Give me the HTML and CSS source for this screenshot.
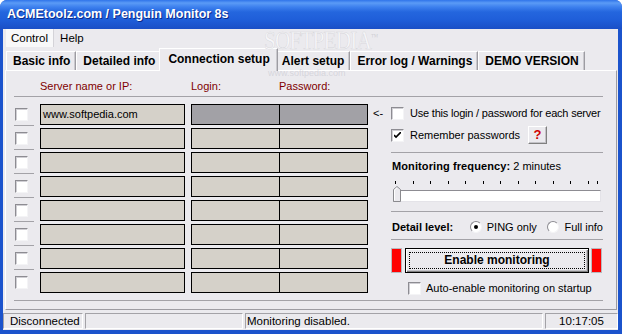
FILE: index.html
```html
<!DOCTYPE html>
<html lang="en">
<head>
    <meta charset="UTF-8">
    <title>ACMEtoolz.com / Penguin Monitor 8s</title>
    <link rel="stylesheet" href="styles.css">
</head>
<body>
    <div class="window">
        <!-- Barra de título -->
        <div class="titlebar">ACMEtoolz.com / Penguin Monitor 8s</div>

        <div class="client">
            <div class="menubar">
                <span class="menu-item open">Control</span>
                <span class="menu-item">Help</span>
            </div>

            <div class="tabs">
                <div class="tab">Basic info</div>
                <div class="tab">Detailed info</div>
                <div class="tab selected">Connection setup</div>
                <div class="tab">Alert setup</div>
                <div class="tab">Error log / Warnings</div>
                <div class="tab">DEMO VERSION</div>
            </div>

            <div class="panel">
                <div class="head">
                    <span></span>
                    <span>Server name or IP:</span>
                    <span>Login:</span>
                    <span>Password:</span>
                </div>

                <div class="main">
                    <!-- Lista de servidores -->
                    <div class="servers">
                        <div class="row">
                            <div class="chk-cell"><span class="checkbox"></span></div>
                            <div class="field server">www.softpedia.com</div>
                            <div class="cred current"><div class="login"></div><div class="pass"></div></div>
                        </div>
                        <div class="row">
                            <div class="chk-cell"><span class="checkbox"></span></div>
                            <div class="field server"></div>
                            <div class="cred"><div class="login"></div><div class="pass"></div></div>
                        </div>
                        <div class="row">
                            <div class="chk-cell"><span class="checkbox"></span></div>
                            <div class="field server"></div>
                            <div class="cred"><div class="login"></div><div class="pass"></div></div>
                        </div>
                        <div class="row">
                            <div class="chk-cell"><span class="checkbox"></span></div>
                            <div class="field server"></div>
                            <div class="cred"><div class="login"></div><div class="pass"></div></div>
                        </div>
                        <div class="row">
                            <div class="chk-cell"><span class="checkbox"></span></div>
                            <div class="field server"></div>
                            <div class="cred"><div class="login"></div><div class="pass"></div></div>
                        </div>
                        <div class="row">
                            <div class="chk-cell"><span class="checkbox"></span></div>
                            <div class="field server"></div>
                            <div class="cred"><div class="login"></div><div class="pass"></div></div>
                        </div>
                        <div class="row">
                            <div class="chk-cell"><span class="checkbox"></span></div>
                            <div class="field server"></div>
                            <div class="cred"><div class="login"></div><div class="pass"></div></div>
                        </div>
                        <div class="row">
                            <div class="chk-cell"><span class="checkbox"></span></div>
                            <div class="field server"></div>
                            <div class="cred"><div class="login"></div><div class="pass"></div></div>
                        </div>
                    </div>

                    <!-- Opções -->
                    <div class="options">
                        <div class="sec sec-login">
                            <div class="opt-row">
                                <span class="arrow">&lt;-</span>
                                <span class="checkbox"></span>
                                <span class="tight">Use this login / password for each server</span>
                            </div>
                            <div class="opt-row">
                                <span class="checkbox checked">
                                    <svg width="7" height="7" viewBox="0 0 7 7"><path d="M0 3 L2 5 L7 0" fill="none" stroke="#000" stroke-width="1.6"/></svg>
                                </span>
                                <span class="remember">Remember passwords</span>
                                <span class="help-btn">?</span>
                            </div>
                        </div>

                        <div class="sec sec-freq">
                            <div class="label"><b>Monitoring frequency:</b> 2 minutes</div>
                            <div class="slider">
                                <div class="ticks">
                                    <div class="tick-run">
                                        <i></i><i></i><i></i><i></i><i></i><i></i>
                                        <i></i><i></i><i></i><i></i><i></i><i></i>
                                    </div>
                                    <i class="tick-last"></i>
                                </div>
                                <div class="track"></div>
                                <svg class="thumb" width="8" height="16" viewBox="0 0 8 16">
                                    <path d="M0.5 15.5 V3.5 L4 0.5 L7.5 3.5 V15.5 Z" fill="#ebeaee" stroke="#8a8a8e"/>
                                    <path d="M1.5 14.5 V4 L4 1.8" fill="none" stroke="#fff"/>
                                </svg>
                            </div>
                        </div>

                        <div class="sec sec-detail">
                            <b class="detail-label">Detail level:</b>
                            <span class="radio-item"><span class="radio on"></span>PING only</span>
                            <span class="radio-item"><span class="radio"></span>Full info</span>
                        </div>

                        <div class="sec sec-enable">
                            <div class="enable-row">
                                <span class="led"></span>
                                <div class="enable-btn"><span>Enable monitoring</span></div>
                                <span class="led"></span>
                            </div>
                            <div class="auto-row">
                                <span class="checkbox"></span>
                                <span>Auto-enable monitoring on startup</span>
                            </div>
                        </div>
                    </div>
                </div>
            </div>

            <div class="statusbar">
                <div class="st st-conn">Disconnected</div>
                <div class="st st-blank"></div>
                <div class="st st-msg">Monitoring disabled.</div>
                <div class="st st-time">10:17:05</div>
            </div>
        </div>

        <div class="watermark">SOFTPEDIA<sup>™</sup></div>
        <div class="watermark-url">www.softpedia.com</div>
    </div>
</body>
</html>
```

FILE: styles.css
```css
/* ######### Geral ######### */
body {
    margin: 0;
    padding: 0;
    font-family: 'Liberation Sans', Arial, sans-serif;
    font-size: 11px;
    color: #000;
    background: #fff;
}

.window {
    position: relative;
    width: 622px;
    height: 334px;
    display: flex;
    flex-direction: column;
    background: #1b53cc;
    border-radius: 7px 7px 0 0;
    overflow: hidden;
}

/* Barra de título estilo XP */
.titlebar {
    height: 29px;
    line-height: 29px;
    padding-left: 7px;
    color: #fff;
    font-weight: bold;
    font-size: 12.5px;
    text-shadow: 1px 1px 0 #0a2a8a;
    background: linear-gradient(to bottom, #2f74ea 0, #5b9bf6 3px, #3d80ee 7px, #2466de 12px, #1f5ed9 20px, #1a4fc6 29px);
}

.client {
    flex: 1;
    margin: 0 4px 4px 3px;
    background: #ebeaee;
    display: flex;
    flex-direction: column;
}

/* Menu */
.menubar {
    height: 18px;
    display: flex;
    align-items: center;
}

.menu-item {
    padding: 0 5px;
    line-height: 18px;
    font-size: 11.5px;
}

.menu-item.open {
    margin-left: 3px;
    background: #f8f8f9;
    border-right: 1px solid #d4d3d8;
}

.menu-item + .menu-item {
    margin-left: 1px;
}

/* Abas */
.tabs {
    height: 23px;
    display: flex;
    align-items: flex-end;
    padding-left: 3px;
    position: relative;
    z-index: 1;
}

.tab {
    height: 19px;
    line-height: 18px;
    padding: 0 5px 0 6px;
    font-weight: bold;
    font-size: 12px;
    white-space: nowrap;
    border-top: 1px solid #fff;
    border-left: 1px solid #fff;
    border-right: 1px solid #9d9ca2;
    box-shadow: inset -1px 0 0 #c9c8cd;
    box-sizing: border-box;
}

.tab.selected {
    height: 23px;
    line-height: 20px;
    margin: 0 -2px -1px -2px;
    padding: 0 7px 0 8px;
    background: #ebeaee;
    position: relative;
}

.tab.selected + .tab {
    border-left: none;
}

/* Painel */
.panel {
    margin: 0 1px 0 2px;
    padding: 0 13px 8px 8px;
    border-top: 1px solid #fff;
    border-left: 1px solid #fff;
    border-right: 1px solid #9d9ca2;
    border-bottom: 1px solid #9d9ca2;
}

.head {
    height: 26px;
    display: grid;
    grid-template-columns: 26px 151px 88px 1fr;
    align-items: end;
    color: #800000;
    font-size: 11px;
    line-height: 14px;
    padding-bottom: 3px;
    box-sizing: border-box;
    border-bottom: 1px solid #a3a2a7;
}

.main {
    height: 203px;
    display: flex;
    border-bottom: 1px solid #a3a2a7;
}

.servers {
    padding-top: 7px;
    flex: none;
}

.row {
    height: 24px;
    display: flex;
    align-items: flex-start;
}

.chk-cell {
    width: 20px;
    height: 22px;
    border-bottom: 1px solid #a3a2a7;
    padding-top: 4px;
    box-sizing: border-box;
}

.row:last-child .chk-cell {
    border-bottom: none;
}

.chk-cell .checkbox {
    margin-left: 1px;
}

.field {
    height: 21px;
    box-sizing: border-box;
    border: 1px solid #000;
    background: #d5d1c9;
}

.server {
    width: 145px;
    margin-left: 6px;
    padding-left: 2px;
    line-height: 18px;
    font-size: 11px;
}

.cred {
    width: 177px;
    height: 21px;
    margin-left: 6px;
    display: flex;
    box-sizing: border-box;
    border: 1px solid #000;
    background: #d5d1c9;
}

.cred.current {
    background: #a2a1a6;
}

.cred .login {
    width: 87px;
    border-right: 1px solid #000;
}

.cred .pass {
    flex: 1;
}

/* Controles */
.checkbox {
    display: inline-flex;
    align-items: center;
    justify-content: center;
    width: 13px;
    height: 13px;
    box-sizing: border-box;
    background: #fff;
    border: 1px solid;
    border-color: #8d8c92 #f4f4f6 #f4f4f6 #8d8c92;
    box-shadow: inset 1px 1px 0 #d0cfd4;
    flex: none;
}

.radio {
    display: inline-block;
    width: 12px;
    height: 12px;
    box-sizing: border-box;
    border-radius: 50%;
    background: #fff;
    border: 1px solid;
    border-color: #8d8c92 #f4f4f6 #f4f4f6 #8d8c92;
    margin-right: 5px;
    position: relative;
    flex: none;
}

.radio.on::after {
    content: '';
    position: absolute;
    left: 3px;
    top: 3px;
    width: 4px;
    height: 4px;
    border-radius: 50%;
    background: #000;
}

.options {
    flex: 1;
    min-width: 0;
    margin-left: 5px;
    padding-left: 18px;
    font-size: 11px;
    white-space: nowrap;
}

.sec {
    border-bottom: 1px solid #a3a2a7;
}

.sec-login {
    padding: 5px 0 6px;
}

.opt-row {
    height: 22px;
    display: flex;
    align-items: center;
}

.opt-row .checkbox {
    margin-right: 6px;
}

.tight {
    letter-spacing: -0.2px;
}

.arrow {
    width: 18px;
    margin-left: -18px;
}

.remember {
    width: 118px;
}

.help-btn {
    width: 19px;
    height: 18px;
    box-sizing: border-box;
    margin-top: -1px;
    text-align: center;
    line-height: 16px;
    color: #d00000;
    font-weight: bold;
    font-size: 13px;
    border: 1px solid;
    border-color: #fff #808080 #808080 #fff;
    box-shadow: inset -1px -1px 0 #c3c2c7;
}

.sec-freq {
    padding: 6px 0 9px;
}

.label {
    line-height: 14px;
    padding-left: 1px;
}

.label b {
    letter-spacing: 0.1px;
}

.slider {
    position: relative;
    height: 21px;
    margin: 8px 2px 0 2px;
}

.ticks {
    display: flex;
    padding-left: 2px;
}

.ticks i {
    display: block;
    width: 1px;
    height: 3px;
    background: #000;
}

.tick-run {
    width: 194px;
    display: flex;
    justify-content: space-between;
}

.ticks .tick-last {
    margin-left: 8px;
}

.track {
    margin-top: 6px;
    height: 12px;
    box-sizing: border-box;
    background: #fff;
    border: 1px solid;
    border-color: #8d8c92 #e4e3e8 #e4e3e8 #8d8c92;
}

.thumb {
    position: absolute;
    left: 0;
    top: 5px;
}

.sec-detail {
    padding: 8px 0 5px;
    display: flex;
    align-items: center;
    line-height: 14px;
}

.detail-label {
    width: 78px;
    padding-left: 1px;
}

.radio-item {
    display: inline-flex;
    align-items: center;
}

.radio-item:first-of-type {
    width: 78px;
}

.sec-enable {
    border-bottom: none;
    padding-top: 8px;
}

.enable-row {
    display: flex;
    height: 25px;
}

.led {
    width: 11px;
    height: 25px;
    box-sizing: border-box;
    background: #ff0000;
    border: 1px solid #b9b8bd;
}

.enable-btn {
    width: 184px;
    margin: 0 2px 0 3px;
    box-sizing: border-box;
    border: 1px solid #000;
    background: #ebeaee;
    box-shadow: inset 1px 1px 0 #fff, inset -1px -1px 0 #808080, inset -2px -2px 0 #c3c2c7;
    padding: 3px;
}

.enable-btn span {
    display: block;
    height: 100%;
    box-sizing: border-box;
    border: 1px dotted #000;
    text-align: center;
    line-height: 15px;
    font-weight: bold;
    font-size: 12px;
}

.auto-row {
    margin-top: 8px;
    height: 14px;
    display: flex;
    align-items: center;
    padding-left: 17px;
}

.auto-row .checkbox {
    margin-right: 5px;
}

/* Barra de status */
.statusbar {
    height: 19px;
    display: flex;
    padding-top: 3px;
    box-sizing: border-box;
    font-size: 11.5px;
}

.st {
    height: 16px;
    line-height: 15px;
    box-sizing: border-box;
    border: 1px solid;
    border-color: #a3a2a7 #fff #fff #a3a2a7;
    margin-right: 2px;
    white-space: nowrap;
}

.st-conn { width: 80px; padding-left: 6px; }
.st-blank { width: 158px; }
.st-msg { width: 298px; padding-left: 1px; }
.st-time { flex: 1; margin-right: 0; text-align: center; }

/* Marca d'água */
.watermark {
    position: absolute;
    left: 264px;
    top: 30px;
    font-family: 'Liberation Serif', serif;
    font-size: 25px;
    line-height: 22px;
    letter-spacing: -1px;
    color: rgba(255, 255, 255, 0.6);
    -webkit-text-stroke: 0.6px rgba(160, 160, 170, 0.3);
    transform: scaleX(0.85);
    transform-origin: left top;
    pointer-events: none;
    z-index: 5;
}

.watermark sup {
    font-size: 9px;
    line-height: 9px;
    -webkit-text-stroke: 0;
    color: rgba(150, 150, 160, 0.35);
}

.watermark-url {
    position: absolute;
    left: 268px;
    top: 69px;
    font-size: 9px;
    line-height: 9px;
    color: rgba(180, 180, 190, 0.4);
    pointer-events: none;
    z-index: 5;
}
```
